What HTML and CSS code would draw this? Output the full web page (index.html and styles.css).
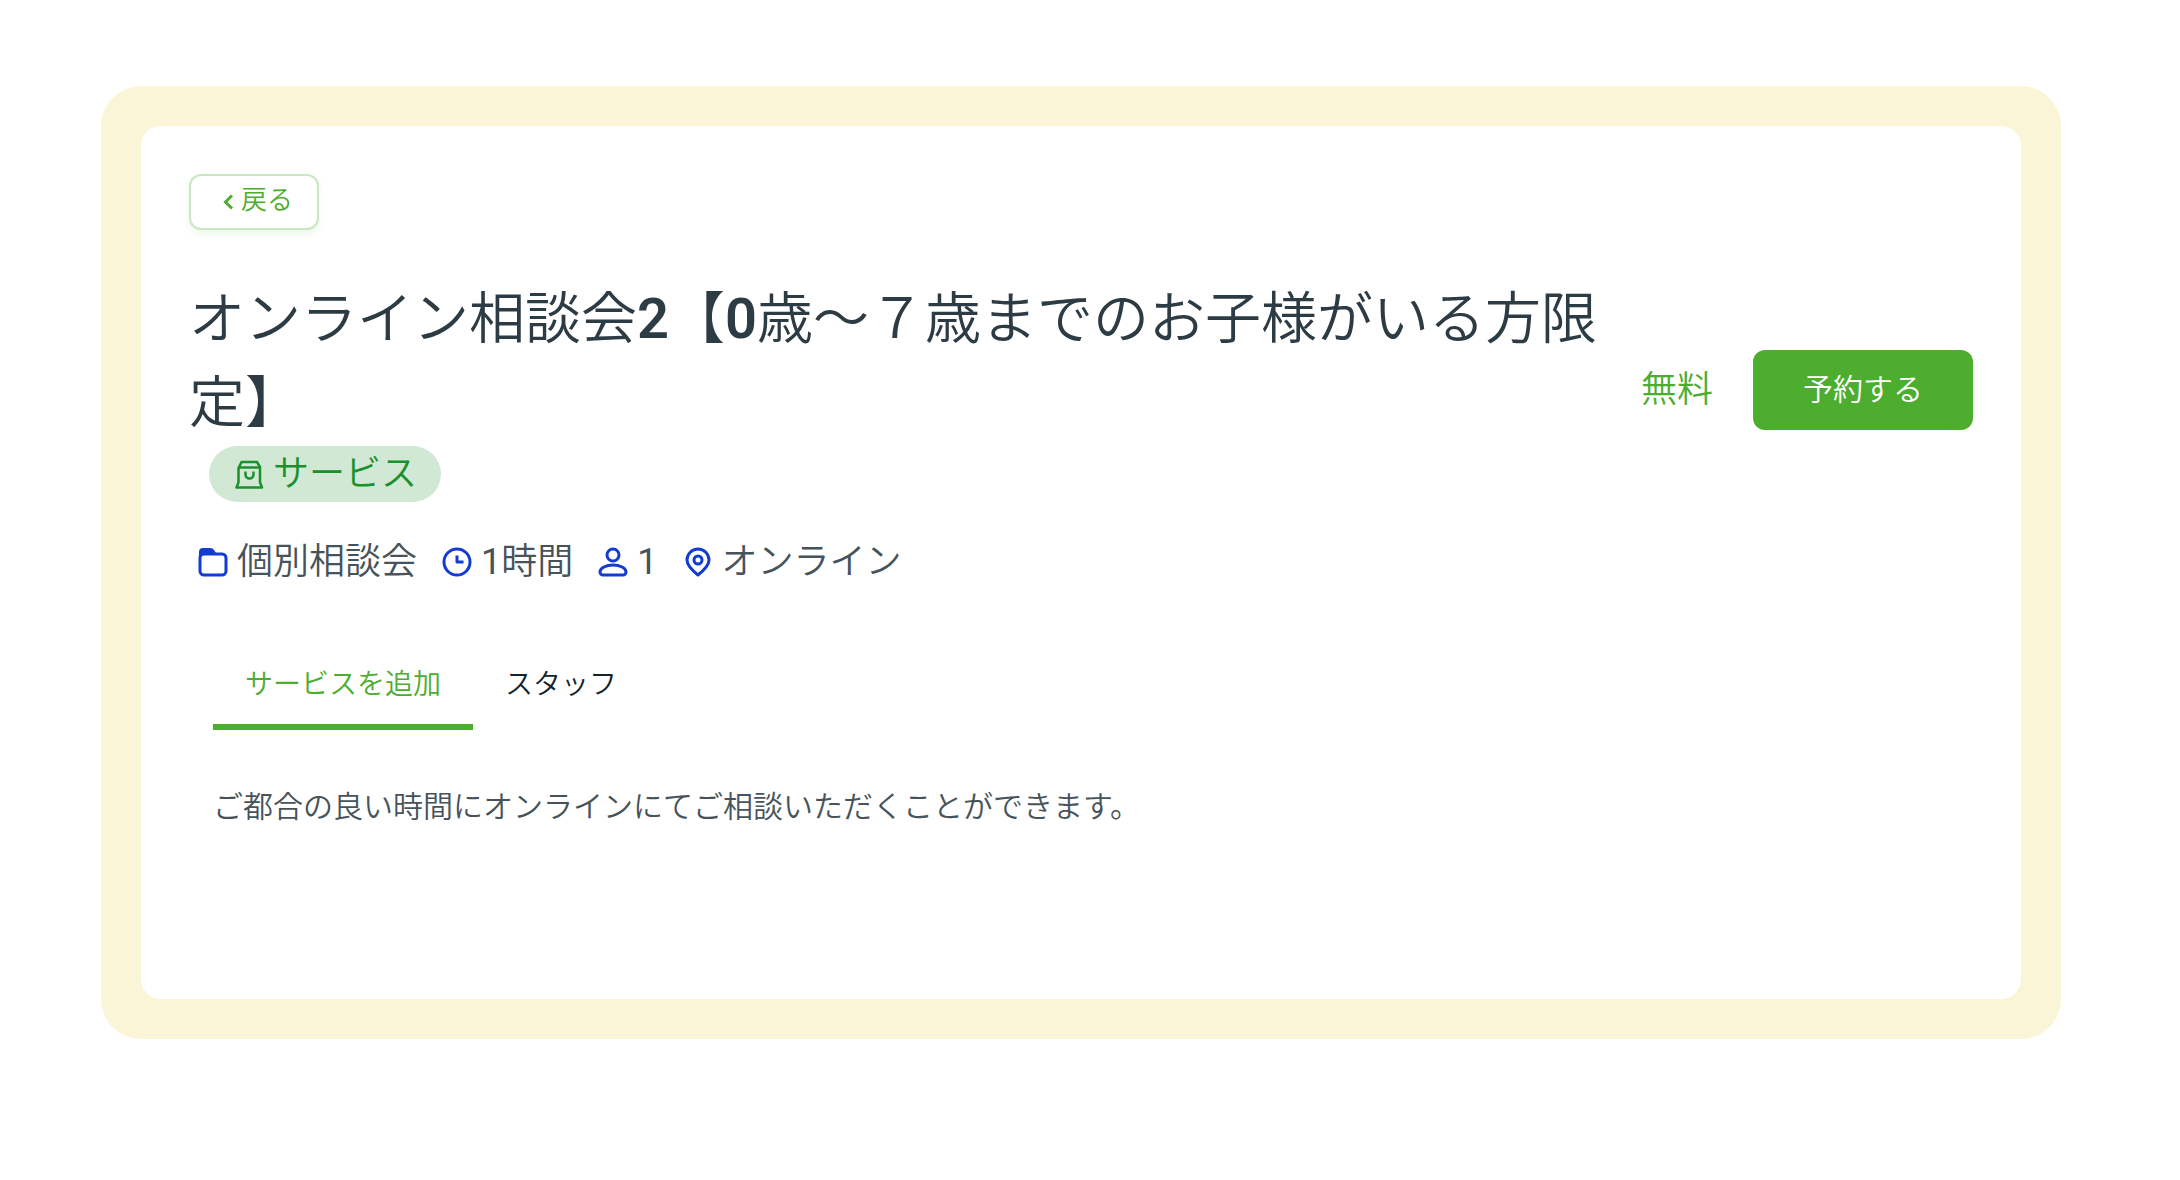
FILE: index.html
```html
<!DOCTYPE html>
<html lang="ja">
    <head>
        <meta charset="UTF-8">
        <title>オンライン相談会2</title>
        <link rel="stylesheet" href="styles.css">
    </head>
    <body>
        <main class="frame">
            <div class="card">
                <button class="back" type="button">
                    <svg class="chevron" viewBox="0 0 12 16"><path d="M9 1.500 2.500 8l6.500 6.500"/></svg>
                    <span>戻る</span>
                </button>

                <div class="header">
                    <div class="heading">
                        <h1 class="title">オンライン相談会<span class="num">2</span>【<span class="num">0</span>歳〜７歳までのお子様がいる方限定】</h1>
                        <div class="badge">
                            <svg class="icon" viewBox="0 0 32 32">
                                <path d="M5.500 10 8.500 4h15.500l3.500 6M5.500 9.500h22M5.500 9.500v15l-2 5h25.500l-2-5v-15M12.500 13.500v3a4 4 0 0 0 8 0v-3"/>
                            </svg>
                            <span>サービス</span>
                        </div>
                    </div>
                    <div class="booking">
                        <span class="price">無料</span>
                        <button class="reserve" type="button">予約する</button>
                    </div>
                </div>

                <ul class="meta">
                    <li>
                        <svg class="icon" viewBox="0 0 32 32">
                            <path class="solid" d="M2 12V6a4 4 0 0 1 4-4h7q3 0 4 2l3 4.500H6q-3 0-4 3.500z"/>
                            <path d="M3 12v13a4 4 0 0 0 4 4h18a4 4 0 0 0 4-4V12a4 4 0 0 0-4-4H7a4 4 0 0 0-4 4z"/>
                        </svg>
                        <span>個別相談会</span>
                    </li>
                    <li>
                        <svg class="icon" viewBox="0 0 32 32">
                            <circle cx="16" cy="16" r="13"/>
                            <path d="M16 9.500V16h6.500"/>
                        </svg>
                        <span><span class="count">1</span>時間</span>
                    </li>
                    <li>
                        <svg class="icon" viewBox="0 0 32 32">
                            <circle cx="16" cy="9" r="6"/>
                            <path d="M6 29h20a3 3 0 0 0 3-3c0-4-6-7-13-7S3 22 3 26a3 3 0 0 0 3 3z"/>
                        </svg>
                        <span class="count">1</span>
                    </li>
                    <li>
                        <svg class="icon" viewBox="0 0 32 32">
                            <circle cx="16" cy="14" r="4"/>
                            <path d="M16 29c-5-4-11-9-11-15a11 11 0 0 1 22 0c0 6-6 11-11 15z"/>
                        </svg>
                        <span>オンライン</span>
                    </li>
                </ul>

                <div class="tabs" role="tablist">
                    <button class="tab active" type="button" role="tab" aria-selected="true">サービスを追加</button>
                    <button class="tab" type="button" role="tab" aria-selected="false">スタッフ</button>
                </div>

                <p class="description">ご都合の良い時間にオンラインにてご相談いただくことができます。</p>
            </div>
        </main>
    </body>
</html>
```
FILE: styles.css
```css
* {
    box-sizing: border-box;
}

body {
    margin: 0;
    padding: 86px 119px 86px 101px;
    background: #fff;
    color: #47535a;
    font-family: Roboto, "Noto Sans CJK JP", sans-serif;
    font-weight: 350;
}

button {
    font: inherit;
    cursor: pointer;
}

.frame {
    padding: 40px;
    border-radius: 40px;
    background: #fbf5d7;
}

.card {
    padding: 48px 48px 170px;
    border-radius: 20px;
    background: #fff;
}

.back {
    display: flex;
    align-items: center;
    justify-content: center;
    gap: 6px;
    height: 56px;
    padding: 0 24px 4px 32px;
    border: 2px solid #c9e7c0;
    border-radius: 12px;
    background: #fff;
    box-shadow: 0 4px 6px rgba(77, 173, 47, 0.1);
    color: #4dad2f;
    font-size: 26px;
    line-height: 40px;
}

.chevron {
    width: 12px;
    height: 16px;
    margin-top: 4px;
    fill: none;
    stroke: currentColor;
    stroke-width: 3;
}

.header {
    display: flex;
    align-items: center;
    gap: 32px;
    margin-top: 47px;
}

.heading {
    flex: 1;
}

.title {
    margin: 0 0 1px;
    color: #2d3c44;
    font-size: 56px;
    font-weight: 350;
    line-height: 84px;
}

.num {
    font-weight: 600;
}

.badge {
    display: inline-flex;
    align-items: center;
    gap: 8px;
    height: 56px;
    margin-left: 20px;
    padding: 0 24px;
    border-radius: 28px;
    background: #d1e8d5;
    color: #1b902b;
    font-size: 36px;
    vertical-align: top;
}

.badge span {
    padding-bottom: 8px;
}

.icon {
    width: 32px;
    height: 32px;
    fill: none;
    stroke: currentColor;
    stroke-width: 2.5;
    stroke-linejoin: round;
}

.booking {
    display: flex;
    align-items: center;
    gap: 40px;
}

.price {
    padding-bottom: 8px;
    color: #4dad2f;
    font-size: 36px;
}

.reserve {
    width: 220px;
    height: 80px;
    padding: 0 0 6px;
    border: none;
    border-radius: 12px;
    background: #4dad2f;
    color: #fff;
    font-size: 30px;
}

.meta {
    display: flex;
    gap: 24px;
    margin: 34px 0 0;
    padding: 0 0 0 8px;
    font-size: 36px;
    line-height: 52px;
    list-style: none;
}

.meta li {
    display: flex;
    align-items: center;
    gap: 8px;
}

.meta .icon {
    color: #123cd2;
    stroke-width: 3;
}

.count {
    font-weight: 400;
}

.solid {
    fill: currentColor;
    stroke: none;
}

.tabs {
    display: flex;
    margin: 48px 0 0 24px;
}

.tab {
    height: 94px;
    padding: 4px 32px 0;
    border: none;
    border-bottom: 6px solid transparent;
    background: none;
    color: #14242d;
    font-size: 28px;
}

.active {
    border-color: #4dad2f;
    color: #4dad2f;
}

.description {
    margin: 55px 0 0 24px;
    font-size: 30px;
    line-height: 44px;
}
```
